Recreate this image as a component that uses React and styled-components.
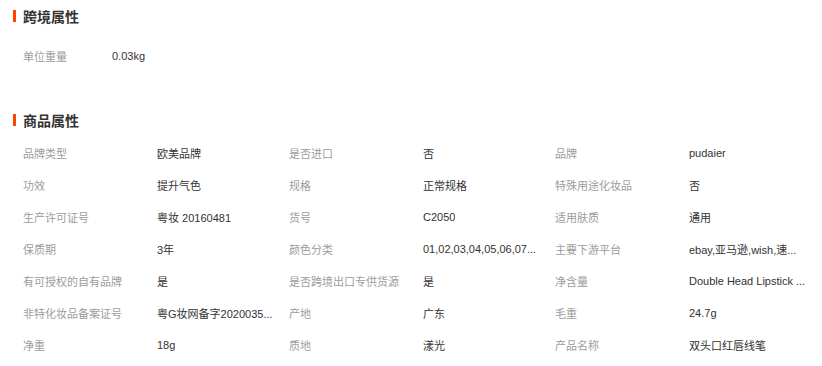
import React from "react";
import styled, { createGlobalStyle } from "styled-components";

const Global = createGlobalStyle`
  html, body { margin: 0; padding: 0; background: #fff; }
  body { font-family: "Liberation Sans", "Noto Sans CJK SC", sans-serif; }
`;

const Page = styled.div`
  width: 822px;
  height: 366px;
  padding: 6px 0 0 13px;
  box-sizing: border-box;
  overflow: hidden;
`;

const Section = styled.section`
  margin-bottom: ${(p) => p.$gap || 0}px;
`;

const Title = styled.h3`
  display: flex;
  align-items: center;
  gap: 7px;
  margin: 0;
  height: 20px;
  font-size: 14px;
  font-weight: bold;
  color: #333;
  font-family: "Noto Sans CJK SC", sans-serif;
  &::before {
    content: "";
    display: block;
    width: 3px;
    height: 12px;
    background: #ff4400;
  }
`;

const Grid = styled.div`
  display: grid;
  grid-template-columns: repeat(${(p) => p.$cols}, ${(p) => p.$colW}px);
  margin-top: ${(p) => p.$top}px;
  padding-left: 10px;
`;

const Cell = styled.div`
  display: flex;
  align-items: center;
  height: 32px;
  font-size: 11px;
  white-space: nowrap;
`;

const Label = styled.span`
  width: ${(p) => p.$w}px;
  flex: none;
  color: #9c9c9c;
`;

const Value = styled.span`
  color: #333;
  overflow: hidden;
  text-overflow: ellipsis;
`;

const cross = [["单位重量", "0.03kg"]];

const goods = [
  ["品牌类型", "欧美品牌"],
  ["是否进口", "否"],
  ["品牌", "pudaier"],
  ["功效", "提升气色"],
  ["规格", "正常规格"],
  ["特殊用途化妆品", "否"],
  ["生产许可证号", "粤妆 20160481"],
  ["货号", "C2050"],
  ["适用肤质", "通用"],
  ["保质期", "3年"],
  ["颜色分类", "01,02,03,04,05,06,07..."],
  ["主要下游平台", "ebay,亚马逊,wish,速..."],
  ["有可授权的自有品牌", "是"],
  ["是否跨境出口专供货源", "是"],
  ["净含量", "Double Head Lipstick ..."],
  ["非特化妆品备案证号", "粤G妆网备字2020035..."],
  ["产地", "广东"],
  ["毛重", "24.7g"],
  ["净重", "18g"],
  ["质地", "漾光"],
  ["产品名称", "双头口红唇线笔"],
];

export default function App() {
  return (
    <>
      <Global />
      <Page>
        <Section $gap={38}>
          <Title>跨境属性</Title>
          <Grid $cols={1} $colW={300} $top={14}>
            {cross.map(([l, v]) => (
              <Cell key={l}>
                <Label $w={89}>{l}</Label>
                <Value>{v}</Value>
              </Cell>
            ))}
          </Grid>
        </Section>
        <Section>
          <Title>商品属性</Title>
          <Grid $cols={3} $colW={266} $top={7}>
            {goods.map(([l, v]) => (
              <Cell key={l}>
                <Label $w={134}>{l}</Label>
                <Value>{v}</Value>
              </Cell>
            ))}
          </Grid>
        </Section>
      </Page>
    </>
  );
}
